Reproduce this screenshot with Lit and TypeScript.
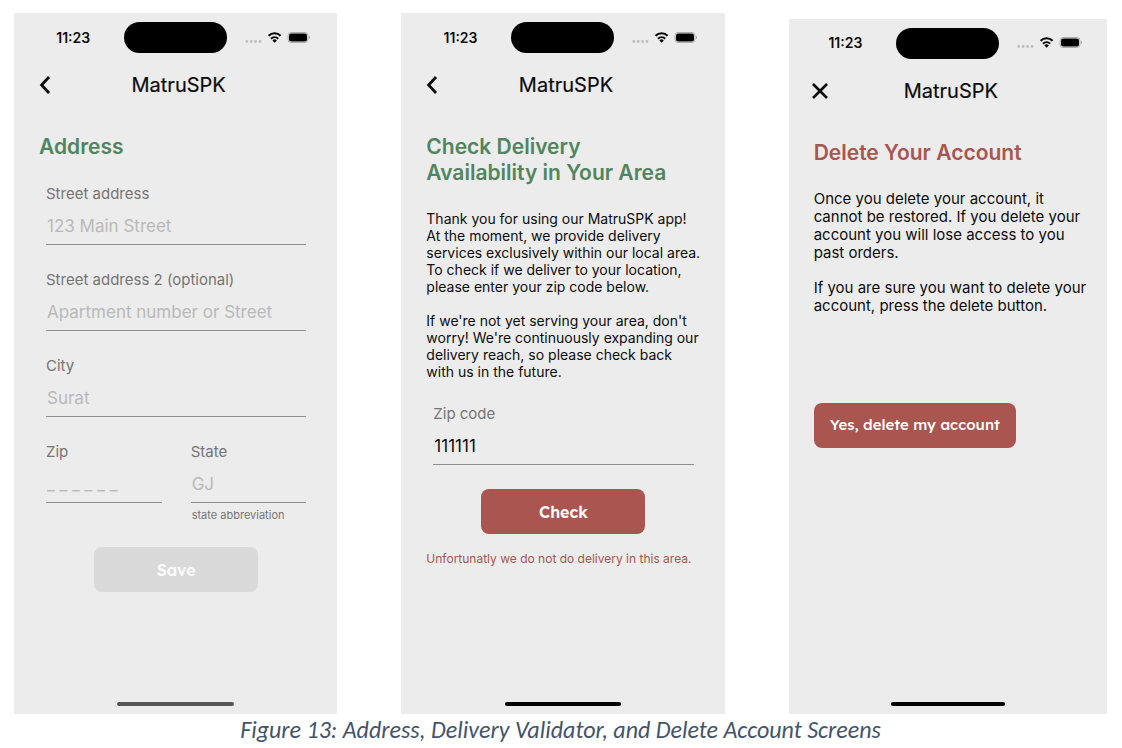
import { LitElement, html, css, svg } from "lit";
import { customElement, property } from "lit/decorators.js";

const backIcon = svg`<path d="M10 1 2.6 9 10 17" fill="none" stroke="currentColor" stroke-width="2.8"/>`;
const closeIcon = svg`<path d="M2 2 16 16M16 2 2 16" fill="none" stroke="currentColor" stroke-width="2.6"/>`;

@customElement("phone-screen")
class PhoneScreen extends LitElement {
  @property() icon = "back";

  static styles = css`
    :host {
      display: flex;
      flex-direction: column;
      background: #ececec;
      color: #0c0c0c;
      min-width: 0;
    }
    .status {
      display: grid;
      grid-template-columns: 1fr 103px 1fr;
      align-items: center;
      padding-top: 9px;
    }
    .time {
      justify-self: end;
      margin-right: 34px;
      font-size: 14px;
      line-height: 18px;
      font-weight: 600;
    }
    .island {
      height: 31px;
      border-radius: 16px;
      background: #000;
    }
    .signals {
      margin-left: 18px;
      width: 66px;
      height: 16px;
    }
    .bar {
      display: grid;
      grid-template-columns: 44px 1fr 38px;
      align-items: center;
      height: 44px;
      margin-top: 10px;
    }
    .nav {
      appearance: none;
      border: 0;
      background: none;
      color: #0c0c0c;
      padding: 0 0 0 22px;
      height: 44px;
      display: flex;
      align-items: center;
    }
    .nav svg {
      flex: none;
    }
    .nav.back {
      padding-left: 25px;
    }
    .title {
      text-align: center;
      font-size: 20px;
      line-height: 26px;
      font-weight: 400;
      -webkit-text-stroke: 0.2px currentColor;
    }
    .body {
      padding: 27px 24px 24px 25px;
    }
    .home {
      width: 36%;
      height: 4px;
      border-radius: 2px;
      background: #000;
      margin: auto auto 8px;
    }
    :host([dim]) .home {
      background: #555;
    }
  `;

  render() {
    const back = this.icon === "back";
    return html`
      <div class="status">
        <span class="time">11:23</span>
        <span class="island"></span>
        <svg class="signals" viewBox="0 0 66 16" aria-hidden="true">
          <g fill="#bdbdbd">
            <circle cx="1.8" cy="11.5" r="1.4" /><circle cx="6.2" cy="11.5" r="1.4" />
            <circle cx="10.6" cy="11.5" r="1.4" /><circle cx="15" cy="11.5" r="1.4" />
          </g>
          <g fill="none" stroke="#000" stroke-width="2">
            <path d="M23.6 5.7a8.6 8.6 0 0 1 12 0" />
            <path d="M26 8.7a5.2 5.2 0 0 1 7.2 0" />
          </g>
          <path d="M27.4 10.4a3.2 3.2 0 0 1 4.4 0l-2.2 2.3z" />
          <rect x="43" y="2.5" width="20" height="10" rx="3.2" fill="none" stroke="#ababab" />
          <rect x="44" y="3.5" width="18" height="8" rx="2.2" />
          <path d="M64.2 5.9q1.8 1.6 0 3.2z" fill="#777" />
        </svg>
      </div>
      <div class="bar">
        <button class="nav ${this.icon}" aria-label=${back ? "Back" : "Close"}>
          <svg width=${back ? 12 : 18} height="18" viewBox="0 0 ${back ? 12 : 18} 18">
            ${back ? backIcon : closeIcon}
          </svg>
        </button>
        <span class="title">MatruSPK</span>
      </div>
      <div class="body"><slot></slot></div>
      <div class="home"></div>
    `;
  }
}

@customElement("form-field")
class FormField extends LitElement {
  @property() label = "";
  @property() placeholder = "";
  @property() value = "";
  @property() helper = "";

  static styles = css`
    :host {
      display: block;
      min-width: 0;
    }
    label {
      display: block;
      font-size: 15px;
      line-height: 18px;
      color: #757575;
    }
    input {
      display: block;
      box-sizing: border-box;
      width: 100%;
      height: 36px;
      margin: 6px 0 0;
      padding: 0 1px 1px;
      border: 0;
      border-bottom: 1px solid #8f8f8f;
      border-radius: 0;
      background: none;
      outline: none;
      font: inherit;
      font-size: 17px;
      color: #0c0c0c;
    }
    input::placeholder {
      color: #b9b9b9;
      opacity: 1;
    }
    .helper {
      margin: 4px 0 0 1px;
      font-size: 11px;
      line-height: 16px;
      color: #757575;
    }
  `;

  render() {
    return html`
      <label for="control">${this.label}</label>
      <input id="control" type="text" .value=${this.value} placeholder=${this.placeholder} />
      ${this.helper ? html`<div class="helper">${this.helper}</div>` : ""}
    `;
  }
}

@customElement("app-root")
class AppRoot extends LitElement {
  static styles = css`
    :host {
      display: block;
      min-height: 100vh;
      box-sizing: border-box;
      background: #fff;
      font-family: Inter, "Liberation Sans", sans-serif;
    }
    .figure {
      margin: 0;
      padding: 13px 15px 0 14px;
    }
    .screens {
      display: grid;
      grid-template-columns: 323fr 323fr 318fr;
      column-gap: 64px;
      align-items: end;
    }
    .screen {
      aspect-ratio: 323 / 700;
    }
    .screen.short {
      aspect-ratio: 318 / 694;
    }
    .heading {
      margin: 0;
      font-size: 21px;
      line-height: 26px;
      font-weight: 600;
      color: #518560;
    }
    .danger {
      color: #a8564f;
    }
    .fields {
      display: grid;
      grid-template-columns: 1fr 1fr;
      gap: 26px 29px;
      margin: 25px 7px 24px;
    }
    .wide {
      grid-column: 1 / -1;
    }
    .copy {
      margin-top: 24px;
      font-size: 14px;
      line-height: 17px;
      white-space: nowrap;
    }
    .copy.roomy {
      font-size: 15px;
      line-height: 18px;
      margin-bottom: 88px;
    }
    .copy p {
      margin: 0 0 17px;
    }
    .copy p:last-child {
      margin-bottom: 0;
    }
    .button {
      display: block;
      height: 45px;
      border: 0;
      border-radius: 8px;
      padding: 0 16px;
      background: #a8564f;
      color: #fff;
      font: 500 15px/20px Lexend, Lato, sans-serif;
    }
    .action {
      width: 164px;
      margin: 0 auto;
      font-size: 16px;
      font-weight: 600;
    }
    .button:disabled {
      background: #d9d9d9;
      color: #fbfbfb;
    }
    .error {
      margin: 17px 0 0;
      font-size: 12px;
      line-height: 16px;
      color: #a8564f;
      white-space: nowrap;
    }
    .caption {
      padding-top: 2px;
      text-align: center;
      font: italic 400 24px/28px Calibri, Carlito, Lato, sans-serif;
      color: #44546a;
    }
  `;

  render() {
    return html`
      <figure class="figure">
        <div class="screens">
          <phone-screen class="screen" dim>
            <h2 class="heading">Address</h2>
            <div class="fields">
              <form-field class="wide" label="Street address" placeholder="123 Main Street"></form-field>
              <form-field
                class="wide"
                label="Street address 2 (optional)"
                placeholder="Apartment number or Street"
              ></form-field>
              <form-field class="wide" label="City" placeholder="Surat"></form-field>
              <form-field label="Zip" placeholder="_ _ _ _ _ _"></form-field>
              <form-field label="State" placeholder="GJ" helper="state abbreviation"></form-field>
            </div>
            <button class="button action" disabled>Save</button>
          </phone-screen>

          <phone-screen class="screen">
            <h2 class="heading">Check Delivery<br />Availability in Your Area</h2>
            <div class="copy">
              <p>
                Thank you for using our MatruSPK app!<br />At the moment, we provide delivery<br />services
                exclusively within our local area.<br />To check if we deliver to your location,<br />please
                enter your zip code below.
              </p>
              <p>
                If we're not yet serving your area, don't<br />worry! We're continuously expanding our<br />delivery
                reach, so please check back<br />with us in the future.
              </p>
            </div>
            <div class="fields">
              <form-field class="wide" label="Zip code" value="111111"></form-field>
            </div>
            <button class="button action">Check</button>
            <p class="error" role="alert">Unfortunatly we do not do delivery in this area.</p>
          </phone-screen>

          <phone-screen class="screen short" icon="close">
            <h2 class="heading danger">Delete Your Account</h2>
            <div class="copy roomy">
              <p>
                Once you delete your account, it<br />cannot be restored. If you delete your<br />account you
                will lose access to you<br />past orders.
              </p>
              <p>If you are sure you want to delete your<br />account, press the delete button.</p>
            </div>
            <button class="button">Yes, delete my account</button>
          </phone-screen>
        </div>
        <figcaption class="caption">
          Figure 13: Address, Delivery Validator, and Delete Account Screens
        </figcaption>
      </figure>
    `;
  }
}
